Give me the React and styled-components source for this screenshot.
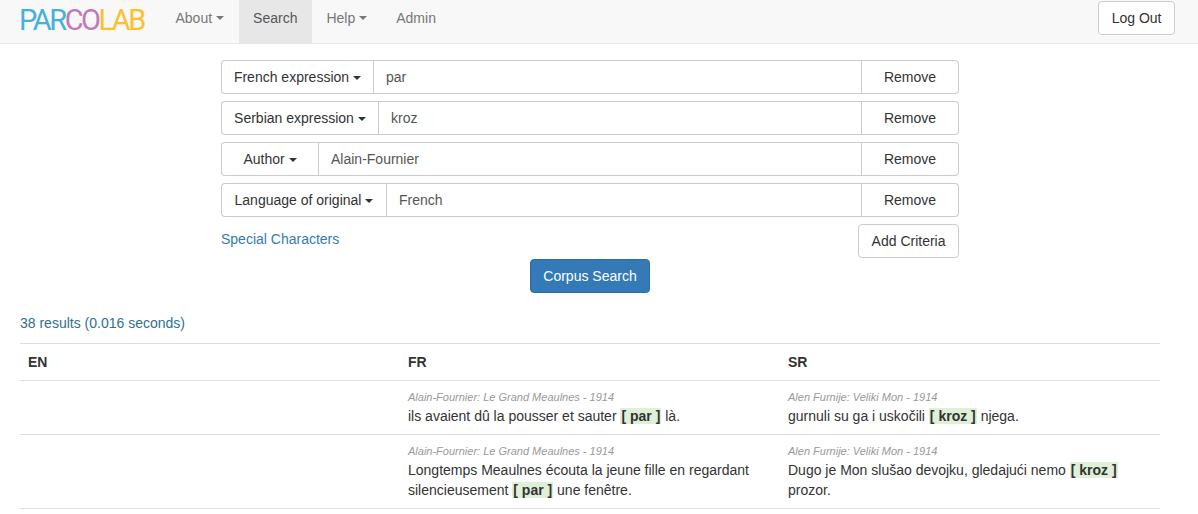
import React from "react";
import styled, { createGlobalStyle } from "styled-components";

const GlobalStyle = createGlobalStyle`
  html, body {
    margin: 0;
    padding: 0;
    background: #fff;
  }
  body {
    font-family: "Liberation Sans", Arial, sans-serif;
    font-size: 14px;
    line-height: 20px;
    color: #333;
  }
  * {
    box-sizing: border-box;
  }
`;

const Navbar = styled.nav`
  display: flex;
  align-items: stretch;
  height: 44px;
  padding: 0 23px 0 20px;
  background: #f8f8f8;
  border-bottom: 1px solid #e7e7e7;
`;

const Logo = styled.a`
  width: 142px;
  margin-left: -1px;
  font-family: "Roboto", sans-serif;
  font-weight: 400;
  font-size: 29px;
  line-height: 40px;
  letter-spacing: -2.5px;
  white-space: nowrap;
  flex: none;
`;

const LogoPart = styled.span`
  color: ${(p) => p.$color};
`;

const NavLink = styled.a`
  display: flex;
  align-items: center;
  padding: 0 14.5px 8px;
  height: 43px;
  color: ${(p) => (p.$active ? "#555" : "#777")};
  background: ${(p) => (p.$active ? "#e7e7e7" : "transparent")};
`;

const Caret = styled.span`
  display: inline-block;
  width: 0;
  height: 0;
  margin-left: 4px;
  vertical-align: middle;
  border-top: 4px solid currentColor;
  border-left: 4px solid transparent;
  border-right: 4px solid transparent;
`;

const Spacer = styled.div`
  flex: 1;
`;

const Button = styled.button`
  height: 34px;
  padding: 0 12.5px;
  font: inherit;
  color: #333;
  background: #fff;
  border: 1px solid #ccc;
  border-radius: 4px;
  white-space: nowrap;
`;

const LogoutButton = styled(Button)`
  align-self: flex-start;
  margin-top: 1px;
`;

const SearchForm = styled.form`
  width: 738px;
  margin: 16px 0 0 221px;
  display: flex;
  flex-direction: column;
  gap: 7px;
`;

const InputGroup = styled.div`
  display: flex;
  height: 34px;
`;

const Dropdown = styled.button`
  width: ${(p) => p.$width}px;
  flex: none;
  padding: 0;
  font: inherit;
  color: #333;
  background: #fff;
  border: 1px solid #ccc;
  border-right: 0;
  border-radius: 4px 0 0 4px;
  white-space: nowrap;
`;

const TextInput = styled.input`
  flex: 1;
  min-width: 0;
  padding: 0 12px;
  font: inherit;
  color: #555;
  background: #fff;
  border: 1px solid #ccc;
  border-radius: 0;
  outline: none;
`;

const RemoveButton = styled.button`
  width: 97px;
  flex: none;
  padding: 0;
  font: inherit;
  color: #333;
  background: #fff;
  border: 1px solid #ccc;
  border-left: 0;
  border-radius: 0 4px 4px 0;
`;

const FormActions = styled.div`
  display: flex;
  justify-content: space-between;
  align-items: center;
`;

const SpecialLink = styled.a`
  color: #337ab7;
  margin-top: -4px;
`;

const SubmitRow = styled.div`
  display: flex;
  justify-content: center;
  margin-top: -6px;
`;

const PrimaryButton = styled(Button)`
  color: #fff;
  background: #337ab7;
  border-color: #2e6da4;
`;

const ResultCount = styled.div`
  margin: 20px 0 0 20px;
  color: #31708f;
`;

const ResultTable = styled.table`
  width: 1140px;
  margin: 10px 0 0 20px;
  border-collapse: collapse;
  table-layout: fixed;
`;

const HeadCell = styled.th`
  height: 37px;
  padding: 0 8px;
  text-align: left;
  font-weight: 700;
  border-top: 1px solid #ddd;
  border-bottom: 1px solid #ddd;
`;

const Cell = styled.td`
  padding: 9px 8px 8px;
  vertical-align: top;
  border-bottom: 1px solid #ddd;
`;

const Source = styled.div`
  font-size: 11px;
  line-height: 15px;
  margin-bottom: 1px;
  font-style: italic;
  color: #999;
`;

const Match = styled.span`
  padding: 0 1px;
  font-weight: 700;
  background: #dff0d8;
`;

const criteria = [
  { label: "French expression", width: 152, value: "par" },
  { label: "Serbian expression", width: 157, value: "kroz" },
  { label: "Author", width: 97, value: "Alain-Fournier" },
  { label: "Language of original", width: 165, value: "French" },
];

const FR_SOURCE = "Alain-Fournier: Le Grand Meaulnes - 1914";
const SR_SOURCE = "Alen Furnije: Veliki Mon - 1914";

const App = () => {
  return (
    <>
      <GlobalStyle />
      <Navbar>
        <Logo>
          <LogoPart $color="#46b0da">PAR</LogoPart>
          <LogoPart $color="#c377b6">CO</LogoPart>
          <LogoPart $color="#fcc02e">LAB</LogoPart>
        </Logo>
        <NavLink>
          About
          <Caret />
        </NavLink>
        <NavLink $active>Search</NavLink>
        <NavLink>
          Help
          <Caret />
        </NavLink>
        <NavLink>Admin</NavLink>
        <Spacer />
        <LogoutButton type="button">Log Out</LogoutButton>
      </Navbar>

      <SearchForm onSubmit={(e) => e.preventDefault()}>
        {criteria.map((c) => (
          <InputGroup key={c.label}>
            <Dropdown type="button" $width={c.width}>
              {c.label}
              <Caret />
            </Dropdown>
            <TextInput defaultValue={c.value} />
            <RemoveButton type="button">Remove</RemoveButton>
          </InputGroup>
        ))}
        <FormActions>
          <SpecialLink>Special Characters</SpecialLink>
          <Button type="button">Add Criteria</Button>
        </FormActions>
        <SubmitRow>
          <PrimaryButton type="submit">Corpus Search</PrimaryButton>
        </SubmitRow>
      </SearchForm>

      <ResultCount>38 results (0.016 seconds)</ResultCount>

      <ResultTable>
        <thead>
          <tr>
            <HeadCell>EN</HeadCell>
            <HeadCell>FR</HeadCell>
            <HeadCell>SR</HeadCell>
          </tr>
        </thead>
        <tbody>
          <tr>
            <Cell />
            <Cell>
              <Source>{FR_SOURCE}</Source>
              ils avaient dû la pousser et sauter <Match>[ par ]</Match> là.
            </Cell>
            <Cell>
              <Source>{SR_SOURCE}</Source>
              gurnuli su ga i uskočili <Match>[ kroz ]</Match> njega.
            </Cell>
          </tr>
          <tr>
            <Cell />
            <Cell>
              <Source>{FR_SOURCE}</Source>
              Longtemps Meaulnes écouta la jeune fille en regardant silencieusement <Match>[ par ]</Match> une fenêtre.
            </Cell>
            <Cell>
              <Source>{SR_SOURCE}</Source>
              Dugo je Mon slušao devojku, gledajući nemo <Match>[ kroz ]</Match> prozor.
            </Cell>
          </tr>
        </tbody>
      </ResultTable>
    </>
  );
};

export default App;
